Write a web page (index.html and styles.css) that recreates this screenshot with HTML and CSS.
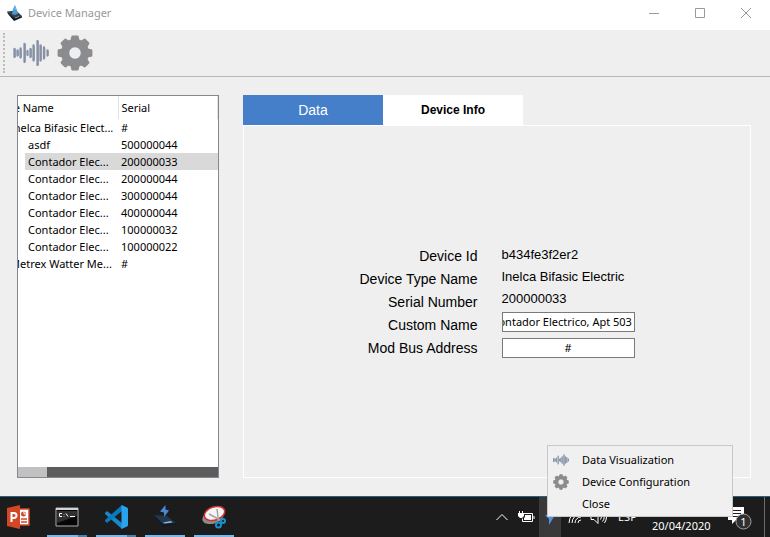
FILE: index.html
```html
<!DOCTYPE html>
<html lang="en">
<head>
<meta charset="utf-8">
<title>Device Manager</title>
<link rel="stylesheet" href="styles.css">
</head>
<body>
<svg class="defs" aria-hidden="true">
  <defs>
    <symbol id="wave" viewBox="0 0 36 26">
      <path d="M1.500 9v8M4.500 10.500v5M7.500 8.500v9M11.500 4v18M14.500 11v4M17.500 9v8M20.500 5.500v15M24.500 1v24M27.500 5.500v15M31 7.500v11M34.500 10.500v5" fill="none" stroke="#7f97be" stroke-width="2.300" stroke-linecap="round"/>
      <path d="M1.900 9.500v7M4.900 11v4M7.900 9v8M11.900 4.500v17M17.900 9.500v7M20.900 6v14M24.900 1.500v23M27.900 6v14M31.400 8v10M34.800 11v4" fill="none" stroke="#8f9093" stroke-width="1.600" stroke-linecap="round"/>
    </symbol>
    <path id="tooth" d="M14.800 5L15.500 1.800h5L21.200 5V7h-6.400z" fill="currentColor" stroke="currentColor" stroke-width="2.400" stroke-linejoin="round"/>
    <symbol id="gear" viewBox="0 0 36 36">
      <circle cx="18" cy="18" r="10" fill="none" stroke="currentColor" stroke-width="8"/>
      <circle cx="18" cy="18" r="6.200" fill="none" stroke="#6d8fc4" stroke-width=".6"/>
      <use href="#tooth"/>
      <use href="#tooth" transform="rotate(45 18 18)"/>
      <use href="#tooth" transform="rotate(90 18 18)"/>
      <use href="#tooth" transform="rotate(135 18 18)"/>
      <use href="#tooth" transform="rotate(180 18 18)"/>
      <use href="#tooth" transform="rotate(225 18 18)"/>
      <use href="#tooth" transform="rotate(270 18 18)"/>
      <use href="#tooth" transform="rotate(315 18 18)"/>
    </symbol>
  </defs>
</svg>

<header class="titlebar">
  <svg class="app-icon" viewBox="0 0 16 16"><path d="M0 6.500l9-1 6 5.500-8 3z" fill="#33424f"/><path d="M0 6.500L7 13l8-2v1.500L7 16 1 9z" fill="#11191f"/><path d="M5 9l1-5 2-4 1.500 4L11 8.500 8 10z" fill="#4b9ad3"/><path d="M7 5l1-5 1 4z" fill="#79bce8"/><path d="M8 13l4-1.500" stroke="#8898a5"/></svg>
  <h1>Device Manager</h1>
  <div class="window-buttons">
    <button aria-label="Minimize"><svg viewBox="0 0 12 12"><path d="M1 6.500h10"/></svg></button>
    <button aria-label="Maximize"><svg viewBox="0 0 12 12"><path d="M1.500 1.500h9v9h-9z"/></svg></button>
    <button aria-label="Close window"><svg viewBox="0 0 12 12"><path d="M1 1l10 10M11 1L1 11"/></svg></button>
  </div>
</header>

<nav class="toolbar">
  <span class="grip"></span>
  <button aria-label="Data Visualization"><svg class="tool-wave"><use href="#wave"/></svg></button>
  <button aria-label="Device Configuration"><svg class="tool-gear"><use href="#gear"/></svg></button>
</nav>

<main>
  <section class="tree">
    <div class="tree-view">
      <table>
        <thead><tr><th class="name">Device Name</th><th>Serial</th></tr></thead>
        <tbody>
          <tr class="root"><td>Inelca Bifasic Elect...</td><td>#</td></tr>
          <tr><td>asdf</td><td>500000044</td></tr>
          <tr class="selected"><td>Contador Elec...</td><td>200000033</td></tr>
          <tr><td>Contador Elec...</td><td>200000044</td></tr>
          <tr><td>Contador Elec...</td><td>300000044</td></tr>
          <tr><td>Contador Elec...</td><td>400000044</td></tr>
          <tr><td>Contador Elec...</td><td>100000032</td></tr>
          <tr><td>Contador Elec...</td><td>100000022</td></tr>
          <tr class="root"><td>Metrex Watter Me...</td><td>#</td></tr>
        </tbody>
      </table>
    </div>
    <div class="scrollbar"><span></span></div>
  </section>

  <section class="details">
    <div class="tabs" role="tablist">
      <button class="tab" role="tab">Data</button>
      <button class="tab active" role="tab" aria-selected="true">Device Info</button>
    </div>
    <div class="panel">
      <form class="info">
        <div class="labels">
          <label for="id">Device Id</label>
          <label for="type">Device Type Name</label>
          <label for="serial">Serial Number</label>
          <label for="custom">Custom Name</label>
          <label for="address">Mod Bus Address</label>
        </div>
        <div class="values">
          <output id="id">b434fe3f2er2</output>
          <output id="type">Inelca Bifasic Electric</output>
          <output id="serial">200000033</output>
          <input id="custom" class="custom" type="text" value="Contador Electrico, Apt 503">
          <input id="address" type="text" value="#">
        </div>
      </form>
    </div>
  </section>
</main>

<footer class="taskbar">
  <div class="apps">
    <button class="app" aria-label="PowerPoint"><svg viewBox="0 0 24 24"><path d="M13 4h10v16H13z" fill="#fff" stroke="#d24726" stroke-width="1.500"/><path d="M1 3l13-3v24L1 21z" fill="#d24726"/><path d="M5.500 17V8H8a2.500 2.500 0 0 1 0 5H6" fill="none" stroke="#fff" stroke-width="2"/><path d="M15 14h6M15 17h6" fill="none" stroke="#d24726" stroke-width="1.500"/><circle cx="17.500" cy="9" r="2.500" fill="#d24726"/><path d="M18 6v3h3" fill="none" stroke="#fff"/></svg></button>
    <button class="app running stacked" aria-label="Command Prompt"><svg viewBox="0 0 24 24"><path d="M1 3h22v18H1z" fill="#060606" stroke="#a9adb0"/><path d="M1 3h22v2H1z" fill="#d0d4d8"/><path d="M2 6h20v5L2 18z" fill="#303030"/><path d="M7 8.500H4.500v3H7M9 9v.5M9 11v.5M11 8.500l2 3M15 11.500h5" fill="none" stroke="#fff"/></svg></button>
    <button class="app running stacked" aria-label="Visual Studio Code"><svg viewBox="0 0 24 24"><path d="M1 8l2-2 15 12v6L1 9z" fill="#1687ce"/><path d="M1 16l2 2L18 6V0L1 15z" fill="#0879bd"/><path d="M17.500 0L23 2.500q1 .5 1 1.500v16q0 1-1 1.500L17.500 24z" fill="#29a3ee"/></svg></button>
    <button class="app running" aria-label="Device Manager"><svg viewBox="0 0 24 24"><path d="M1 10l13 1 9 7-13 2z" fill="#20384f"/><path d="M1 10l9 9 13-1v1l-13 3z" fill="#0e1a27"/><path d="M10 17.500l8-1.500 1.500 1.500-8 1z" fill="#a8b0b8"/><path d="M12.500 0L7 6.500l4 1v4.500l5-6.500-3.500-1z" fill="#4c87d3"/></svg></button>
    <button class="app running" aria-label="Snipping Tool"><svg viewBox="0 0 24 24"><ellipse cx="11" cy="12" rx="11" ry="6.500" transform="rotate(-18 11 12)" fill="#8b8b8b"/><ellipse cx="12.500" cy="8.500" rx="10.500" ry="6.500" transform="rotate(-18 12.500 8.500)" fill="#f4f4f4" stroke="#d3313a" stroke-width="1.500"/><path d="M7 9l11 6M15 4l1.500 12" stroke="#a5a5a5" stroke-width="1.500"/><g fill="none" stroke="#1991cf" stroke-width="2"><circle cx="16.500" cy="20" r="2.500"/><circle cx="21" cy="16" r="2"/></g></svg></button>
  </div>
  <div class="tray">
    <svg class="caret" viewBox="0 0 14 8"><path d="M1.500 7L7 1.500 12.500 7"/></svg>
    <svg class="battery" viewBox="0 0 17 13"><path d="M5.500 2.500h9v8h-10V7.500M16 5v3M1.500 0v2.500M4.500 0v2.500"/><path d="M0 2h6v3L4 7H2L0 5zM7 4h6v5H6V7l1-1z" fill="#fff" stroke="none"/></svg>
    <span class="tray-app"><svg viewBox="0 0 12 18"><path d="M1 7h10L5 17V11z"/></svg></span>
    <svg class="wifi" viewBox="0 0 14 14"><path d="M1 13A12 12 0 0 1 13 1M4 13a9 9 0 0 1 9-9M7 13a6 6 0 0 1 6-6M10 13a3 3 0 0 1 3-3"/></svg>
    <svg class="sound" viewBox="0 0 17 14"><path d="M1 4.500h3l4-4v13l-4-4H1zM10.500 4.500q2 2.500 0 5M12.500 2.500q3.500 4.500 0 9M14.500 1q4 6 0 12"/></svg>
    <span class="lang">ESP</span>
    <span class="date">20/04/2020</span>
    <button class="notices" aria-label="Notifications"><svg viewBox="0 0 26 26"><path d="M1 1h16v13H9l-4 4v-4H1z" fill="#fff"/><path d="M4 4.500h10M4 7.500h10M4 10.500h10" stroke="#222"/><circle cx="16.500" cy="15.500" r="7.500" fill="#303030" stroke="#a0a0a0"/></svg><span>1</span></button>
  </div>
  <div class="menu" role="menu">
    <button role="menuitem"><svg><use href="#wave"/></svg>Data Visualization</button>
    <button role="menuitem"><svg><use href="#gear"/></svg>Device Configuration</button>
    <button role="menuitem"><svg></svg>Close</button>
  </div>
</footer>
</body>
</html>
```
FILE: styles.css
```css
* { box-sizing: border-box; }

body {
  margin: 0;
  min-height: 100vh;
  display: flex;
  flex-direction: column;
  background: #efefef;
  color: #000;
  font: 11px/16px "Noto Sans", "Open Sans", sans-serif;
}

button { margin: 0; padding: 0; border: 0; background: none; color: inherit; font: inherit; }
svg { display: block; flex: none; }
.defs { position: absolute; width: 0; height: 0; }

.titlebar { display: flex; align-items: center; height: 30px; padding: 0 1px 4px 7px; background: #fff; color: #999; }
.titlebar h1 { margin: 0 auto 0 5px; font-size: 11px; font-weight: 400; }
.app-icon { width: 16px; height: 16px; }
.window-buttons { display: flex; }
.window-buttons button { display: grid; place-items: center; width: 46px; height: 26px; }
.window-buttons svg { width: 12px; height: 12px; fill: none; stroke: #999; }

.toolbar { display: flex; align-items: center; gap: 8px; height: 47px; padding-left: 3px; border-bottom: 1px solid #b7b7b7; }
.grip { height: 40px; border-left: 2px dotted #bcbcbc; }
.tool-wave { width: 36px; height: 26px; }
.tool-gear { width: 36px; height: 36px; color: #8c8c8c; }

main { flex: 1; display: flex; gap: 24px; padding: 18px 19px 18px 17px; }

.tree { display: flex; flex-direction: column; flex: 0 0 202px; border: 1px solid #828790; background: #fff; }
.tree-view { flex: 1; overflow: hidden; }
/* The view is scrolled sideways by 36px. */
.tree table { width: 236px; margin-left: -36px; border-collapse: collapse; table-layout: fixed; text-align: left; white-space: nowrap; }
.tree th { height: 23px; padding: 0 3px; border-right: 1px solid #e2e2e2; font-weight: 400; }
.tree .name { width: 136px; padding-left: 4px; }
.tree td { height: 17px; padding: 0 0 0 3px; line-height: 17px; }
.tree td:first-child { padding-left: 46px; }
.tree .root td:first-child { padding-left: 28px; }
.selected td { background: #d9d9d9; }
.selected td:first-child { background: linear-gradient(90deg, #fff 43px, #d9d9d9 43px); }
.scrollbar { height: 10px; background: #5c5c5c; }
.scrollbar span { display: block; width: 29px; height: 10px; background: #c1c1c1; }

.details { flex: 1; display: flex; flex-direction: column; font-family: "Liberation Sans", Arial, sans-serif; }
.tabs { display: flex; }
.tab { width: 140px; height: 30px; background: #467fc9; color: #fff; font-size: 14px; }
.tab.active { background: #fff; color: #000; font-size: 12px; font-weight: 700; }
.panel { flex: 1; display: grid; place-items: center; padding-bottom: 2px; border: 1px solid #fff; }
.info { display: flex; gap: 24px; font-size: 14px; }
.labels { display: flex; flex-direction: column; justify-content: space-between; padding-top: 2px; line-height: 20px; text-align: right; }
.values { display: flex; flex-direction: column; font-size: 13px; line-height: 22px; }
.values input { width: 133px; height: 20px; padding: 0; border: 1px solid #7a7a7a; background: #fff; color: #000; font: 11px/16px "Noto Sans", "Open Sans", sans-serif; text-align: center; }
.values .custom { margin: 2px 0 6px; text-align: left; text-indent: -11px; }

.taskbar { position: relative; display: flex; justify-content: space-between; height: 41px; border-top: 1px solid #286287; background: #1c1c1c; color: #fff; }
.apps { display: flex; gap: 9px; margin-left: -2px; }
.app { position: relative; display: grid; place-items: center; width: 40px; height: 40px; }
.app svg { width: 24px; height: 24px; }
.app.running::after { content: ""; position: absolute; inset: auto 0 0; height: 2px; background: #76b9ed; }
.app.stacked::after { background: linear-gradient(90deg, #76b9ed 31px, #527fa4 31px); }

.tray { display: flex; align-items: center; margin-right: 5px; padding-right: 11px; border-right: 1px solid #6b6b6b; }
.tray svg { fill: none; stroke: #fff; }
.caret { width: 14px; height: 8px; margin-right: 9px; }
.battery { width: 17px; height: 13px; margin-right: 4px; }
.tray-app { display: grid; place-items: center; width: 22px; height: 40px; margin-right: 7px; background: #393939; }
.tray-app svg { width: 12px; height: 18px; }
.tray .tray-app svg { fill: #4d93e8; stroke: none; }
.wifi { width: 14px; height: 14px; margin-right: 8px; }
.sound { width: 17px; height: 14px; margin-right: 11px; }
.lang { width: 34px; }
.date { align-self: flex-end; width: 75px; padding-bottom: 3px; }
.notices { position: relative; padding-top: 4px; }
.notices svg { width: 26px; height: 26px; }
.tray .notices svg { stroke: none; }
.notices span { position: absolute; left: 9px; top: 12px; width: 15px; text-align: center; }

.menu { position: absolute; right: 37px; bottom: 20px; width: 186px; padding: 3px 0 1px; border: 1px solid #c8c8c8; background: #f0f0f0; color: #000; }
.menu button { display: flex; align-items: center; gap: 13px; width: 100%; height: 22px; padding-left: 5px; text-align: left; }
.menu svg { width: 16px; height: 16px; color: #8c8c8c; }
```
